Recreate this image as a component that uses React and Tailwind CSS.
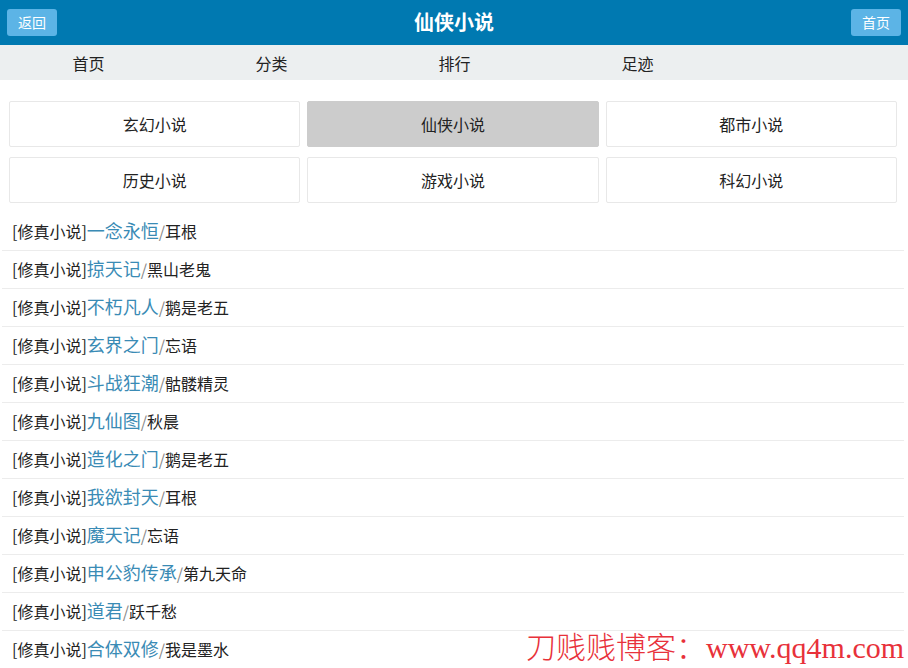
import React from 'react';

const categories = [
  { name: '玄幻小说' },
  { name: '仙侠小说', active: true },
  { name: '都市小说' },
  { name: '历史小说' },
  { name: '游戏小说' },
  { name: '科幻小说' },
];

const books = [
  { title: '一念永恒', author: '耳根' },
  { title: '掠天记', author: '黑山老鬼' },
  { title: '不朽凡人', author: '鹅是老五' },
  { title: '玄界之门', author: '忘语' },
  { title: '斗战狂潮', author: '骷髅精灵' },
  { title: '九仙图', author: '秋晨' },
  { title: '造化之门', author: '鹅是老五' },
  { title: '我欲封天', author: '耳根' },
  { title: '魔天记', author: '忘语' },
  { title: '申公豹传承', author: '第九天命' },
  { title: '道君', author: '跃千愁' },
  { title: '合体双修', author: '我是墨水' },
];

const App = () => {
  return (
    <div
      className="relative min-h-[668px] bg-white text-[#222]"
      style={{ fontFamily: '"Microsoft YaHei", "Noto Sans CJK SC", "Noto Sans", sans-serif' }}
    >
      {/* 顶部标题栏 */}
      <div className="h-[45px] bg-[#0079b1] flex items-center justify-between px-[7px] pb-[1px]">
        <button className="w-[50px] h-[27px] rounded-[3px] bg-[#5cb4e6] text-white text-[14px] leading-none">
          返回
        </button>
        <h1 className="text-white text-[20px] font-bold leading-none">仙侠小说</h1>
        <button className="w-[50px] h-[27px] rounded-[3px] bg-[#5cb4e6] text-white text-[14px] leading-none">
          首页
        </button>
      </div>

      {/* 导航 */}
      <div className="h-[35px] bg-[#eceff0] flex items-center pl-[-2px]">
        {['首页', '分类', '排行', '足迹'].map((item) => (
          <a key={item} className="w-[183px] text-center text-[16px] text-[#222] first:ml-[-3px]">
            {item}
          </a>
        ))}
      </div>

      {/* 分类 */}
      <div className="grid grid-cols-3 gap-x-[7px] gap-y-[10px] pl-[9px] pr-[11px] mt-[21px]">
        {categories.map((c) => (
          <div
            key={c.name}
            className={`h-[46px] flex items-center justify-center rounded-[2px] border text-[16px] pb-[1px] ${
              c.active ? 'bg-[#cccccc] border-[#cccccc]' : 'bg-white border-[#e8e8e8]'
            }`}
          >
            {c.name}
          </div>
        ))}
      </div>

      {/* 书籍列表 */}
      <ul className="mt-[10px] ml-[2px] mr-[4px]">
        {books.map((b) => (
          <li
            key={b.title}
            className="h-[38px] flex items-center px-[10px] pb-[2px] border-b border-[#ececec] whitespace-nowrap"
          >
            <span className="text-[16px] text-[#222]">[修真小说]</span>
            <a className="text-[18px] text-[#3a8bb5]">{b.title}</a>
            <span className="text-[16px] text-[#888]">/</span>
            <span className="text-[16px] text-[#222]">{b.author}</span>
          </li>
        ))}
      </ul>

      {/* 水印 */}
      <div
        className="absolute left-[526px] top-[633px] text-[30px] font-light leading-none text-[#e8313a] whitespace-nowrap pointer-events-none"
        style={{ fontFamily: '"Liberation Serif", "Noto Sans CJK SC", serif' }}
      >
        刀贱贱博客：www.qq4m.com
      </div>
    </div>
  );
};

export default App;
